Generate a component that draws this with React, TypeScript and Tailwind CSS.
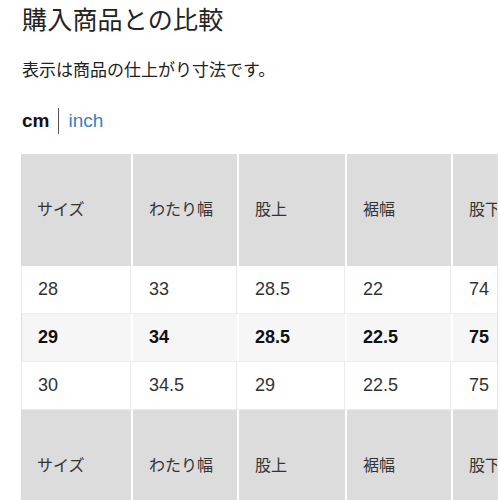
import React from "react";

const font = { fontFamily: '"Liberation Sans", "Noto Sans CJK JP", sans-serif' };

const headers = ["サイズ", "わたり幅", "股上", "裾幅", "股下"];
const rows = [
  { v: ["28", "33", "28.5", "22", "74"], bold: false },
  { v: ["29", "34", "28.5", "22.5", "75"], bold: true },
  { v: ["30", "34.5", "29", "22.5", "75"], bold: false },
];

const cols = "grid grid-cols-[110px_104px_106px_104px_104px] gap-x-[2px]";

function HeaderRow() {
  return (
    <div className={cols}>
      {headers.map((h) => (
        <div key={h} className="h-[112px] bg-[#dcdcdc] flex items-center pl-4 text-[16px] text-[#333] whitespace-nowrap">
          {h}
        </div>
      ))}
    </div>
  );
}

export default function App() {
  return (
    <div className="w-[500px] h-[500px] overflow-hidden bg-white text-[#222]" style={font}>
      <div className="pl-[22px] pt-[7px]">
        <h1 className="text-[25px] leading-[26px] text-[#222] tracking-[0.2px]">購入商品との比較</h1>
        <p className="mt-[27px] text-[17px] leading-[22px] text-[#222]">表示は商品の仕上がり寸法です。</p>
        <div className="mt-[26px] flex items-center h-[26px]">
          <span className="text-[19px] font-bold text-[#111]">cm</span>
          <span className="mx-[9px] w-[1px] h-[26px] bg-[#555]" />
          <span className="text-[19px] text-[#3a7fc0]">inch</span>
        </div>
      </div>
      <div className="ml-[21px] mt-[20px] w-[477px] overflow-hidden border-r border-[#e2e2e2]">
        <div className="w-[540px]">
          <HeaderRow />
          {rows.map((r, i) => (
            <div key={i} className={`${cols} border-b border-[#ececec]`}>
              {r.v.map((c, j) => (
                <div
                  key={j}
                  className={`h-[47px] flex items-center pl-4 text-[18px] ${
                    r.bold ? "font-bold bg-[#f6f6f6] text-[#111]" : "bg-white text-[#333]"
                  } ${j === 0 ? "border-l border-[#dedede]" : ""} ${!r.bold ? "border-r border-[#ececec]" : ""}`}
                >
                  {c}
                </div>
              ))}
            </div>
          ))}
          <HeaderRow />
        </div>
      </div>
    </div>
  );
}
